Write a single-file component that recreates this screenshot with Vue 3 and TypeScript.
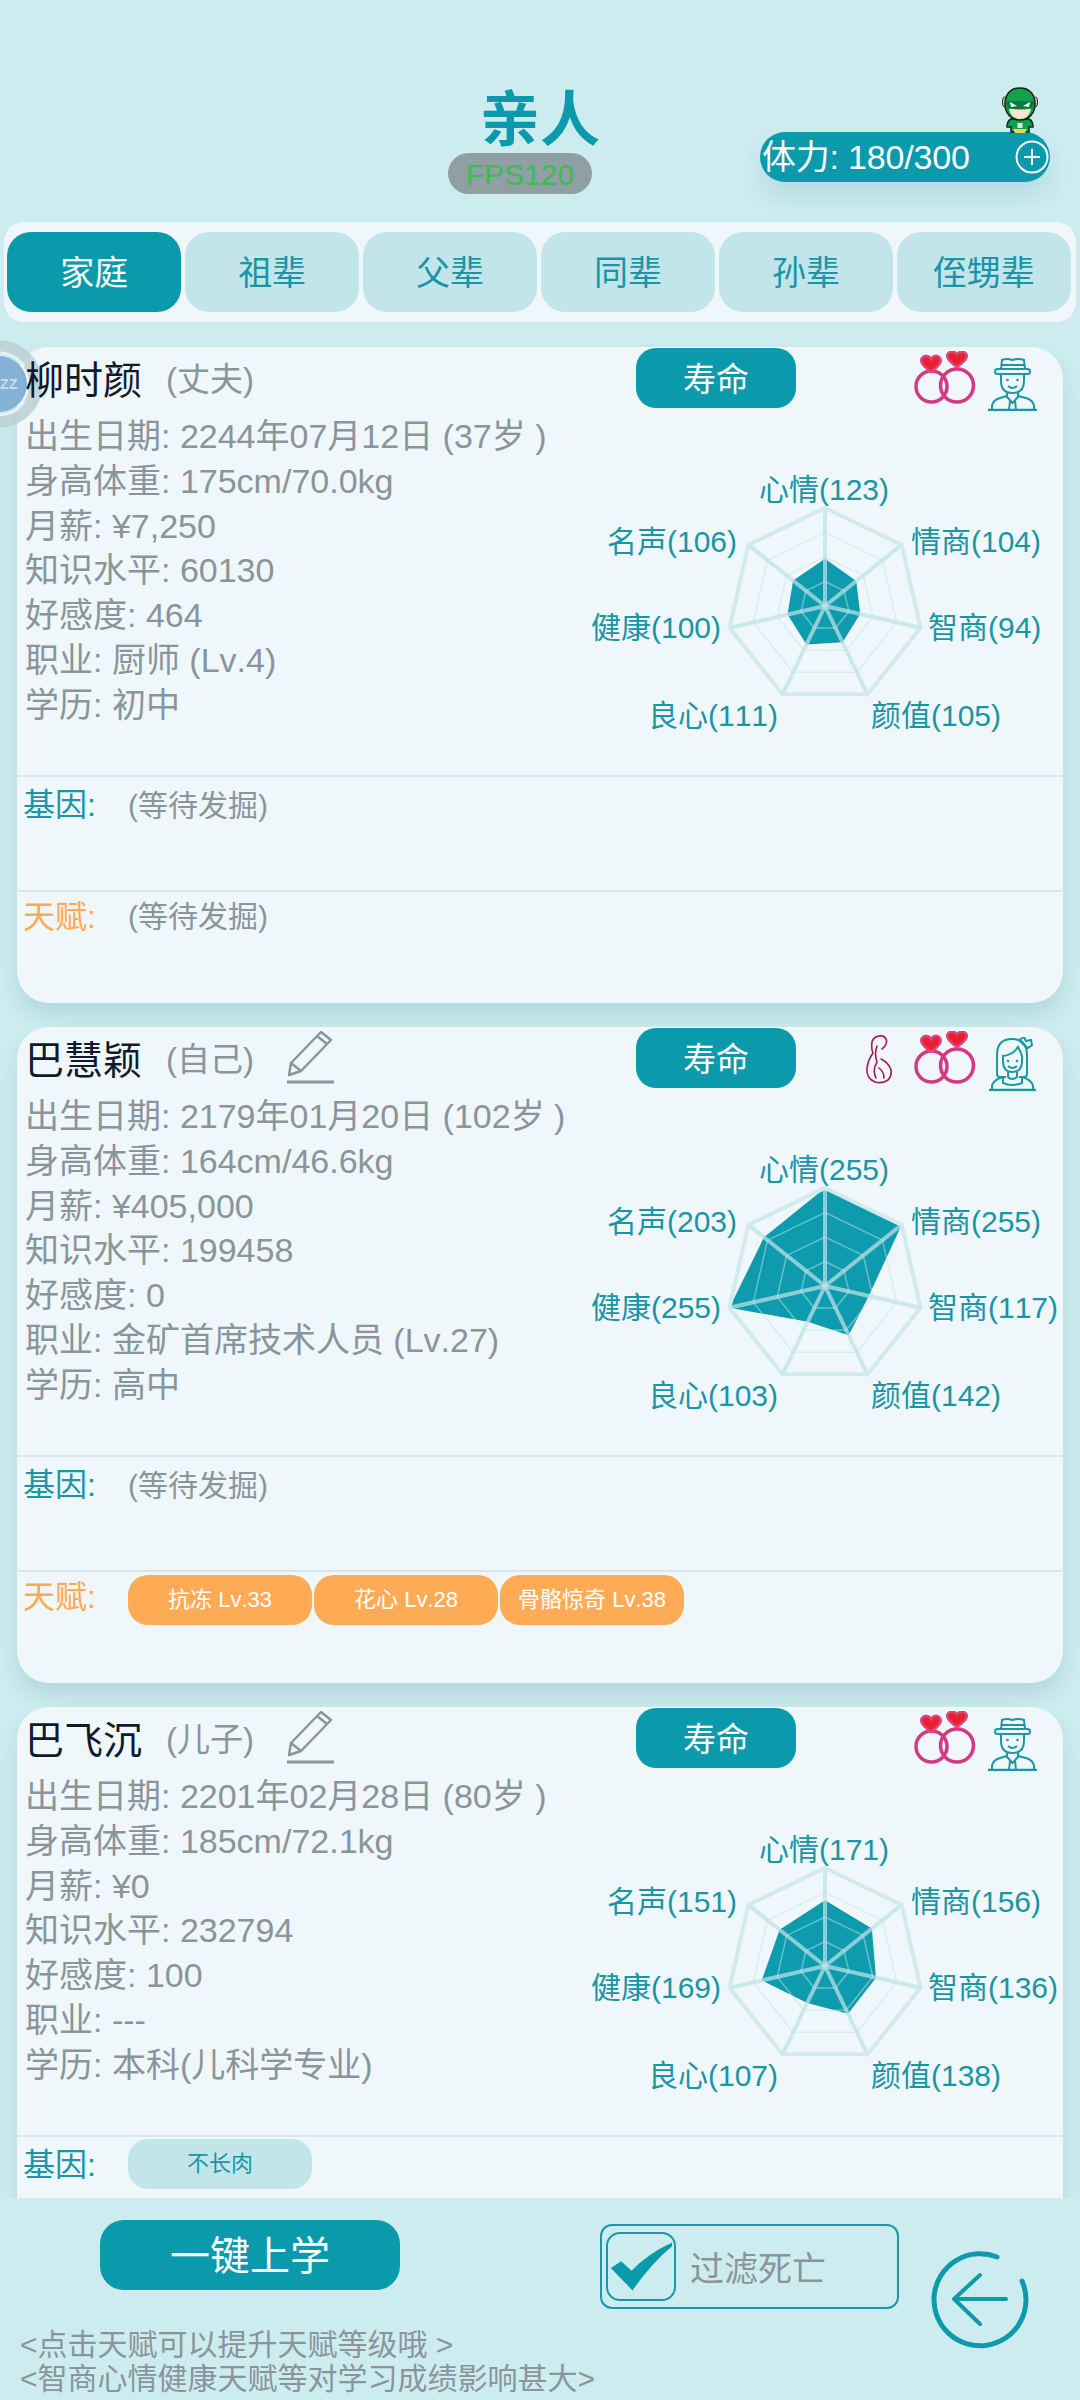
<template>
  <div class="page">
    <header class="head">
      <div></div>
      <div class="head__center">
        <h1 class="head__title">亲人</h1>
        <span class="head__fps">FPS120</span>
      </div>
      <div class="stamina">
        <svg class="stamina__hero" viewBox="0 0 36 46">
          <path d="M9 32 Q5 34 5 40 H9 V45 H27 V40 H31 Q31 34 27 32 Z" fill="#12a04c" stroke="#10241a" stroke-width="1.5" />
          <path d="M11 42 H25 L23 46 H13 Z" fill="#e6d84a" />
          <rect x="15.5" y="36" width="5" height="5" fill="#d8efdc" />
          <ellipse cx="2.5" cy="15" rx="2" ry="5" fill="#e9d6ae" stroke="#10241a" />
          <ellipse cx="33.5" cy="15" rx="2" ry="5" fill="#e9d6ae" stroke="#10241a" />
          <path d="M18 1 C7 1 3 9 3 17 C3 26 9 33 18 33 C27 33 33 26 33 17 C33 9 29 1 18 1 Z" fill="#12a04c" stroke="#10241a" stroke-width="1.5" />
          <path d="M7 22 Q18 19 29 22 Q27 32 18 32 Q9 32 7 22 Z" fill="#f6e6d2" />
          <path d="M3 14 H33 L30 21 Q18 24 6 21 Z" fill="#0d7a3a" />
          <path d="M8 15 L15 19 L9 20 Z M28 15 L21 19 L27 20 Z" fill="#fff" />
        </svg>
        <span class="stamina__text">体力: 180/300</span>
        <svg class="stamina__plus" viewBox="0 0 34 34">
          <circle cx="17" cy="17" r="15.5" fill="none" stroke="#fff" stroke-width="2" />
          <path d="M17 9 V25 M9 17 H25" stroke="#fff" stroke-width="2" />
        </svg>
      </div>
    </header>

    <nav class="tabs">
      <button
        v-for="(tab, i) in tabs"
        :key="tab"
        class="tabs__item"
        :class="{ 'is-active': i === 0 }"
      >
        {{ tab }}
      </button>
    </nav>

    <section class="list">
      <svg class="sleep" viewBox="0 0 90 90">
        <circle cx="45" cy="45" r="37" fill="none" stroke="#bccfd4" stroke-width="13" opacity="0.85" />
        <path d="M45 14 A31 31 0 0 1 70 27 M70 63 A31 31 0 0 1 45 76" fill="none" stroke="#e2f2f6" stroke-width="3" />
        <circle cx="45" cy="45" r="28" fill="#86b2d6" />
        <text x="46" y="50" class="sleep__text">ZZ</text>
      </svg>

      <article v-for="card in cards" :key="card.name" class="card">
        <div class="card__top">
          <div class="info">
            <div class="info__name">
              <strong>{{ card.name }}</strong>
              <span class="info__rel">({{ card.rel }})</span>
              <svg v-if="card.edit" class="info__pen" viewBox="0 0 47 53">
                <path d="M2 44 L4 32 L34 1 L44 9 L14 40 Z M4 32 L14 40 M30 5 L40 13" fill="none" stroke="#8a949b" stroke-width="2.4" stroke-linejoin="round" />
                <path d="M0 51 H47" stroke="#8a949b" stroke-width="3" />
              </svg>
            </div>
            <p v-for="line in card.lines" :key="line" class="info__line">{{ line }}</p>
          </div>

          <div class="side">
            <div class="side__head">
              <button class="side__life">寿命</button>
              <div class="side__icons">
                <svg v-if="card.pregnant" class="icon-preg" viewBox="0 0 28 50">
                  <path d="M19 2 Q10 1 8 8 Q7 14 9 19 Q4 26 3 34 Q2 44 11 48 Q18 50 24 46 Q28 42 27 36 Q25 29 17 25 M19 2 Q24 5 22 10 Q21 13 18 15 M13 12 Q10 20 13 28 Q8 36 12 44 M15 34 Q20 38 20 44" fill="none" stroke="#a3195b" stroke-width="1.6" stroke-linecap="round" />
                </svg>
                <svg class="icon-rings" viewBox="0 0 63 53">
                  <circle cx="18.500" cy="35.500" r="15.500" fill="none" stroke="#d43a84" stroke-width="3.500" />
                  <circle cx="44" cy="34.500" r="16.500" fill="none" stroke="#d43a84" stroke-width="3.500" />
                  <path d="M18 21 C8 14 7 10 9 7 C11 4 16 4 18 8 C20 4 25 4 27 7 C29 10 28 14 18 21 Z" fill="#e8202f" stroke="#d9487f" stroke-width="2.500" />
                  <path d="M44 16 C34 9 33 5 35 2.500 C37 0 42 0 44 3.500 C46 0 51 0 53 2.500 C55 5 54 9 44 16 Z" fill="#e8202f" stroke="#d9487f" stroke-width="2.500" />
                </svg>
                <svg v-if="card.gender === 'm'" class="icon-person" viewBox="0 0 50 54">
                  <g fill="none" stroke="#1a98a8" stroke-width="2">
                    <path d="M13 12 L14 3 Q19 1 24.500 3 Q31 1 36 3 L37 12 M14 8 H36" />
                    <rect x="7" y="12" width="35" height="5" rx="2.500" />
                    <path d="M13 17 V24 Q13 36 24.500 36 Q36 36 36 24 V17" />
                    <path d="M20 29 Q24.500 33 29 29" />
                    <path d="M19 35 V40 L24.500 46 L30 40 V35" />
                    <path d="M4 53 V49 Q5 43 12 41 L19 39 M30 39 L38 41 Q45 43 46 49 V53 M22 44 L21 53 M27 44 L28 53" />
                    <path d="M0 53 H49" stroke-width="2.500" />
                  </g>
                  <circle cx="19.500" cy="23" r="1.300" fill="#1a98a8" />
                  <circle cx="29.500" cy="23" r="1.300" fill="#1a98a8" />
                </svg>
                <svg v-else class="icon-person" viewBox="0 0 50 54">
                  <g fill="none" stroke="#1a98a8" stroke-width="2">
                    <path d="M18 40 H12 Q9 40 9 37 V18 Q9 2 24 2 Q39 2 39 18 V37 Q39 40 36 40 H31" />
                    <path d="M15 19 Q25 18 30 10 Q33 15 34 19 V24 Q34 35 24.500 35 Q15 35 15 24 Z" />
                    <path d="M20 29 Q24.500 33 29 29" />
                    <path d="M31 3 L36 0 L38 4 L43 3 L44 8 L40 11 L36 8 Z" />
                    <path d="M20 35 V40 Q24 44 29 40 V35" />
                    <path d="M4 53 V49 Q5 43 15 40 M34 40 Q44 43 45 49 V53 M15 40 V46 Q24 50 34 46 V40" />
                    <path d="M1 53 H48" stroke-width="2.500" />
                  </g>
                  <circle cx="20" cy="24" r="1.300" fill="#1a98a8" />
                  <circle cx="29" cy="24" r="1.300" fill="#1a98a8" />
                </svg>
              </div>
            </div>

            <svg class="radar" viewBox="0 0 483 366">
              <polygon :points="shape(card.stats)" class="radar__fill" />
              <polygon :points="ring(0.25)" class="radar__ring" />
              <polygon :points="ring(0.5)" class="radar__ring" />
              <polygon :points="ring(0.75)" class="radar__ring" />
              <line
                v-for="(pt, i) in spokes"
                :key="i"
                :x1="CX"
                :y1="CY"
                :x2="pt[0]"
                :y2="pt[1]"
                class="radar__spoke"
              />
              <polygon :points="ring(1)" class="radar__outer" />
              <text
                v-for="(item, i) in labels"
                :key="item.name"
                :x="item.x"
                :y="item.y"
                :text-anchor="item.anchor"
                class="radar__label"
              >
                {{ item.name }}({{ card.stats[i] }})
              </text>
            </svg>
          </div>
        </div>

        <div class="sec">
          <span class="sec__label">基因:</span>
          <div v-if="card.genes.length" class="sec__chips">
            <span v-for="g in card.genes" :key="g" class="chip chip--gene">{{ g }}</span>
          </div>
          <span v-else class="sec__empty">(等待发掘)</span>
        </div>
        <div class="sec sec--talent">
          <span class="sec__label">天赋:</span>
          <div v-if="card.talents.length" class="sec__chips">
            <span v-for="t in card.talents" :key="t" class="chip">{{ t }}</span>
          </div>
          <span v-else class="sec__empty">(等待发掘)</span>
        </div>
      </article>
    </section>

    <footer class="foot">
      <div class="foot__left">
        <button class="foot__btn">一键上学</button>
        <p class="foot__hint">&lt;点击天赋可以提升天赋等级哦 &gt;</p>
        <p class="foot__hint">&lt;智商心情健康天赋等对学习成绩影响甚大&gt;</p>
      </div>
      <div class="filter">
        <span class="filter__box">
          <svg viewBox="0 0 70 69">
            <path d="M3 36 L14 29 L25 39 Q42 21 68 9 L68 13 Q46 31 26 60 Z" fill="#0a9aac" />
          </svg>
        </span>
        <span class="filter__text">过滤死亡</span>
      </div>
      <svg class="back" viewBox="0 0 100 100">
        <path d="M68 8 A46 46 0 1 0 93 32" fill="none" stroke="#0f9aac" stroke-width="5" stroke-linecap="round" />
        <path d="M77 50 H25 M51 26 L25 50 L51 75" fill="none" stroke="#0f9aac" stroke-width="4" stroke-linecap="round" stroke-linejoin="round" />
      </svg>
    </footer>
  </div>
</template>

<script setup lang="ts">
type Person = {
  name: string;
  rel: string;
  edit: boolean;
  pregnant: boolean;
  gender: 'm' | 'f';
  lines: string[];
  stats: number[];
  genes: string[];
  talents: string[];
};

const CX = 245;
const CY = 197;
const R = 98;

const tabs = ['家庭', '祖辈', '父辈', '同辈', '孙辈', '侄甥辈'];

const labels = [
  { name: '心情', x: 244, y: 91, anchor: 'middle' },
  { name: '情商', x: 331, y: 143, anchor: 'start' },
  { name: '智商', x: 348, y: 229, anchor: 'start' },
  { name: '颜值', x: 356, y: 317, anchor: 'middle' },
  { name: '良心', x: 133, y: 317, anchor: 'middle' },
  { name: '健康', x: 141, y: 229, anchor: 'end' },
  { name: '名声', x: 157, y: 143, anchor: 'end' }
];

const cards: Person[] = [
  {
    name: '柳时颜',
    rel: '丈夫',
    edit: false,
    pregnant: false,
    gender: 'm',
    lines: [
      '出生日期: 2244年07月12日 (37岁 )',
      '身高体重: 175cm/70.0kg',
      '月薪: ¥7,250',
      '知识水平: 60130',
      '好感度: 464',
      '职业: 厨师 (Lv.4)',
      '学历: 初中'
    ],
    stats: [123, 104, 94, 105, 111, 100, 106],
    genes: [],
    talents: []
  },
  {
    name: '巴慧颖',
    rel: '自己',
    edit: true,
    pregnant: true,
    gender: 'f',
    lines: [
      '出生日期: 2179年01月20日 (102岁 )',
      '身高体重: 164cm/46.6kg',
      '月薪: ¥405,000',
      '知识水平: 199458',
      '好感度: 0',
      '职业: 金矿首席技术人员 (Lv.27)',
      '学历: 高中'
    ],
    stats: [255, 255, 117, 142, 103, 255, 203],
    genes: [],
    talents: ['抗冻 Lv.33', '花心 Lv.28', '骨骼惊奇 Lv.38']
  },
  {
    name: '巴飞沉',
    rel: '儿子',
    edit: true,
    pregnant: false,
    gender: 'm',
    lines: [
      '出生日期: 2201年02月28日 (80岁 )',
      '身高体重: 185cm/72.1kg',
      '月薪: ¥0',
      '知识水平: 232794',
      '好感度: 100',
      '职业: ---',
      '学历: 本科(儿科学专业)'
    ],
    stats: [171, 156, 136, 138, 107, 169, 151],
    genes: ['不长肉'],
    talents: []
  }
];

// 七边形顶点，从正上方顺时针
function vertex(i: number, r: number): [number, number] {
  const a = (i * 2 * Math.PI) / 7;
  return [CX + r * Math.sin(a), CY - r * Math.cos(a)];
}

const spokes = Array.from({ length: 7 }, (_, i) => vertex(i, R));

function ring(level: number): string {
  return spokes.map((_, i) => vertex(i, R * level).join(',')).join(' ');
}

function shape(stats: number[]): string {
  return stats.map((v, i) => vertex(i, (R * v) / 255).join(',')).join(' ');
}
</script>

<style>
html,
body {
  margin: 0;
  background: #cdecef;
}
</style>

<style scoped>
.page {
  display: flex;
  flex-direction: column;
  width: 1080px;
  height: 2400px;
  overflow: hidden;
  background: #cdecef;
  font-family: 'Liberation Sans', 'Noto Sans CJK SC', sans-serif;
  font-kerning: none;
}

button {
  border: 0;
  padding: 0;
  font-family: inherit;
}

.head {
  display: grid;
  grid-template-columns: 1fr auto 1fr;
  flex: none;
  height: 134px;
  padding-top: 88px;
}

.head__center {
  display: flex;
  flex-direction: column;
  align-items: center;
}

.head__title {
  margin: 0;
  padding-top: 1px;
  color: #0a9aac;
  font-size: 60px;
  font-weight: 700;
  line-height: 64px;
}

.head__fps {
  width: 144px;
  height: 41px;
  margin-right: 40px;
  border-radius: 21px;
  background: #8f9fa3;
  color: #3dbb55;
  font-size: 30px;
  line-height: 43px;
  text-align: center;
}

.stamina {
  position: relative;
  display: flex;
  align-items: center;
  justify-content: space-between;
  align-self: start;
  justify-self: end;
  box-sizing: border-box;
  width: 290px;
  height: 50px;
  margin: 44px 30px 0 0;
  padding: 0 1px 0 2px;
  border-radius: 25px;
  background: #0a9aac;
  box-shadow: 0 14px 24px rgba(20, 110, 125, 0.12);
  color: #fff;
  font-size: 34px;
}

.stamina__text {
  margin-top: -5px;
  letter-spacing: -0.2px;
}

.stamina__hero {
  position: absolute;
  top: -45px;
  right: 12px;
  width: 36px;
  height: 46px;
}

.stamina__plus {
  width: 34px;
  height: 34px;
}

.tabs {
  display: flex;
  flex: none;
  gap: 3.5px;
  height: 80px;
  margin: 0 4px;
  padding: 10px 5px 10px 3px;
  border-radius: 20px;
  background: #eff7fa;
}

.tabs__item {
  flex: 1;
  padding-bottom: 3px;
  border-radius: 24px;
  background: #c2e5ea;
  color: #1a95a5;
  font-size: 34px;
}

.tabs__item.is-active {
  background: #0a9aac;
  color: #fff;
}

.list {
  position: relative;
  display: flex;
  flex-direction: column;
  flex: none;
  gap: 24px;
  box-sizing: border-box;
  height: 1876px;
  padding: 25px 17px 0;
  overflow: hidden;
}

.sleep {
  position: absolute;
  top: 17px;
  left: -46px;
  z-index: 2;
  width: 90px;
  height: 90px;
}

.sleep__text {
  fill: #c9dcec;
  font-size: 14px;
  font-weight: 700;
  letter-spacing: 0.5px;
}

.card {
  display: flex;
  flex-direction: column;
  flex: none;
  height: 656px;
  border-radius: 32px;
  background: #eff7fa;
  box-shadow: 0 12px 20px rgba(20, 100, 115, 0.14);
}

.card__top {
  display: flex;
  flex: none;
  height: 428px;
}

.info {
  position: relative;
  z-index: 3;
  flex: none;
  box-sizing: border-box;
  width: 563px;
  padding-left: 8px;
}

.info__name {
  display: flex;
  align-items: center;
  height: 60px;
  margin-bottom: 7px;
}

.info__name strong {
  color: #0f1b2d;
  font-size: 39px;
  font-weight: 400;
}

.info__rel {
  margin-left: 24px;
  color: #8a949b;
  font-size: 33px;
}

.info__pen {
  width: 47px;
  height: 53px;
  margin-left: 33px;
}

.info__line {
  margin: 0;
  color: #8a949b;
  font-size: 34px;
  line-height: 44.8px;
  white-space: nowrap;
}

.side {
  flex: none;
  width: 483px;
}

.side__head {
  display: flex;
  align-items: flex-start;
  justify-content: space-between;
  height: 62px;
  padding-right: 25px;
}

.side__life {
  width: 160px;
  height: 60px;
  margin: 1px 0 0 56px;
  padding-bottom: 2px;
  border-radius: 20px;
  background: #0a9aac;
  color: #fff;
  font-size: 33px;
}

.side__icons {
  display: flex;
  align-items: flex-start;
}

.icon-preg {
  width: 28px;
  height: 50px;
  margin: 7px 21px 0 0;
}

.icon-rings {
  width: 63px;
  height: 53px;
  margin: 4px 12px 0 0;
}

.icon-person {
  width: 50px;
  height: 54px;
  margin-top: 10px;
}

.radar {
  display: block;
  width: 483px;
  height: 366px;
  overflow: visible;
}

.radar__fill {
  fill: #0d9bad;
}

.radar__ring {
  fill: none;
  stroke: rgba(190, 232, 238, 0.5);
  stroke-width: 1.5;
}

.radar__spoke {
  stroke: rgba(190, 226, 232, 0.72);
  stroke-width: 4;
}

.radar__outer {
  fill: none;
  stroke: #d2e9ed;
  stroke-width: 4;
}

.radar__label {
  fill: #1a95a5;
  font-size: 30px;
}

.sec {
  display: flex;
  align-items: flex-start;
  flex: none;
  box-sizing: border-box;
  height: 115px;
  margin: 0 -1px;
  padding: 0 0 0 7px;
  border-top: 2px solid #d8e8ea;
}

.sec--talent {
  height: 113px;
}

.sec__label {
  flex: none;
  width: 105px;
  margin-top: 8px;
  color: #1a95a5;
  font-size: 32px;
  line-height: 40px;
}

.sec--talent .sec__label {
  margin-top: 5px;
  color: #ffa950;
}

.sec__empty {
  margin-top: 9px;
  color: #8a949b;
  font-size: 30px;
  line-height: 40px;
}

.sec--talent .sec__empty {
  margin-top: 5px;
}

.sec__chips {
  display: flex;
  gap: 2px;
  margin-top: 2px;
}

.sec--talent .sec__chips {
  margin-top: 3px;
}

.chip {
  width: 184px;
  height: 50px;
  border-radius: 20px;
  background: #ffab55;
  color: #fff;
  font-size: 22px;
  line-height: 50px;
  text-align: center;
  white-space: nowrap;
}

.chip--gene {
  background: #c2e5ea;
  color: #1a95a5;
}

.foot {
  display: flex;
  align-items: flex-start;
  flex: none;
}

.foot__left {
  flex: none;
  box-sizing: border-box;
  width: 600px;
  padding: 22px 0 0 20px;
}

.foot__btn {
  display: block;
  width: 300px;
  height: 70px;
  margin: 0 0 38px 80px;
  padding-bottom: 5px;
  border-radius: 24px;
  background: #0a9aac;
  color: #fff;
  font-size: 40px;
}

.foot__hint {
  margin: 0;
  color: #8a949b;
  font-size: 30px;
  line-height: 34px;
  white-space: nowrap;
}

.filter {
  display: flex;
  align-items: center;
  flex: none;
  box-sizing: border-box;
  width: 299px;
  height: 85px;
  margin-top: 26px;
  padding-left: 4px;
  border: 2px solid #1a98a8;
  border-radius: 12px;
}

.filter__box {
  flex: none;
  box-sizing: border-box;
  width: 70px;
  height: 69px;
  border: 2px solid #1a98a8;
  border-radius: 14px;
}

.filter__box svg {
  display: block;
  width: 66px;
  height: 65px;
}

.filter__text {
  margin-left: 14px;
  color: #8a949b;
  font-size: 34px;
}

.back {
  flex: none;
  width: 100px;
  height: 100px;
  margin: 51px 0 0 30px;
}
</style>
